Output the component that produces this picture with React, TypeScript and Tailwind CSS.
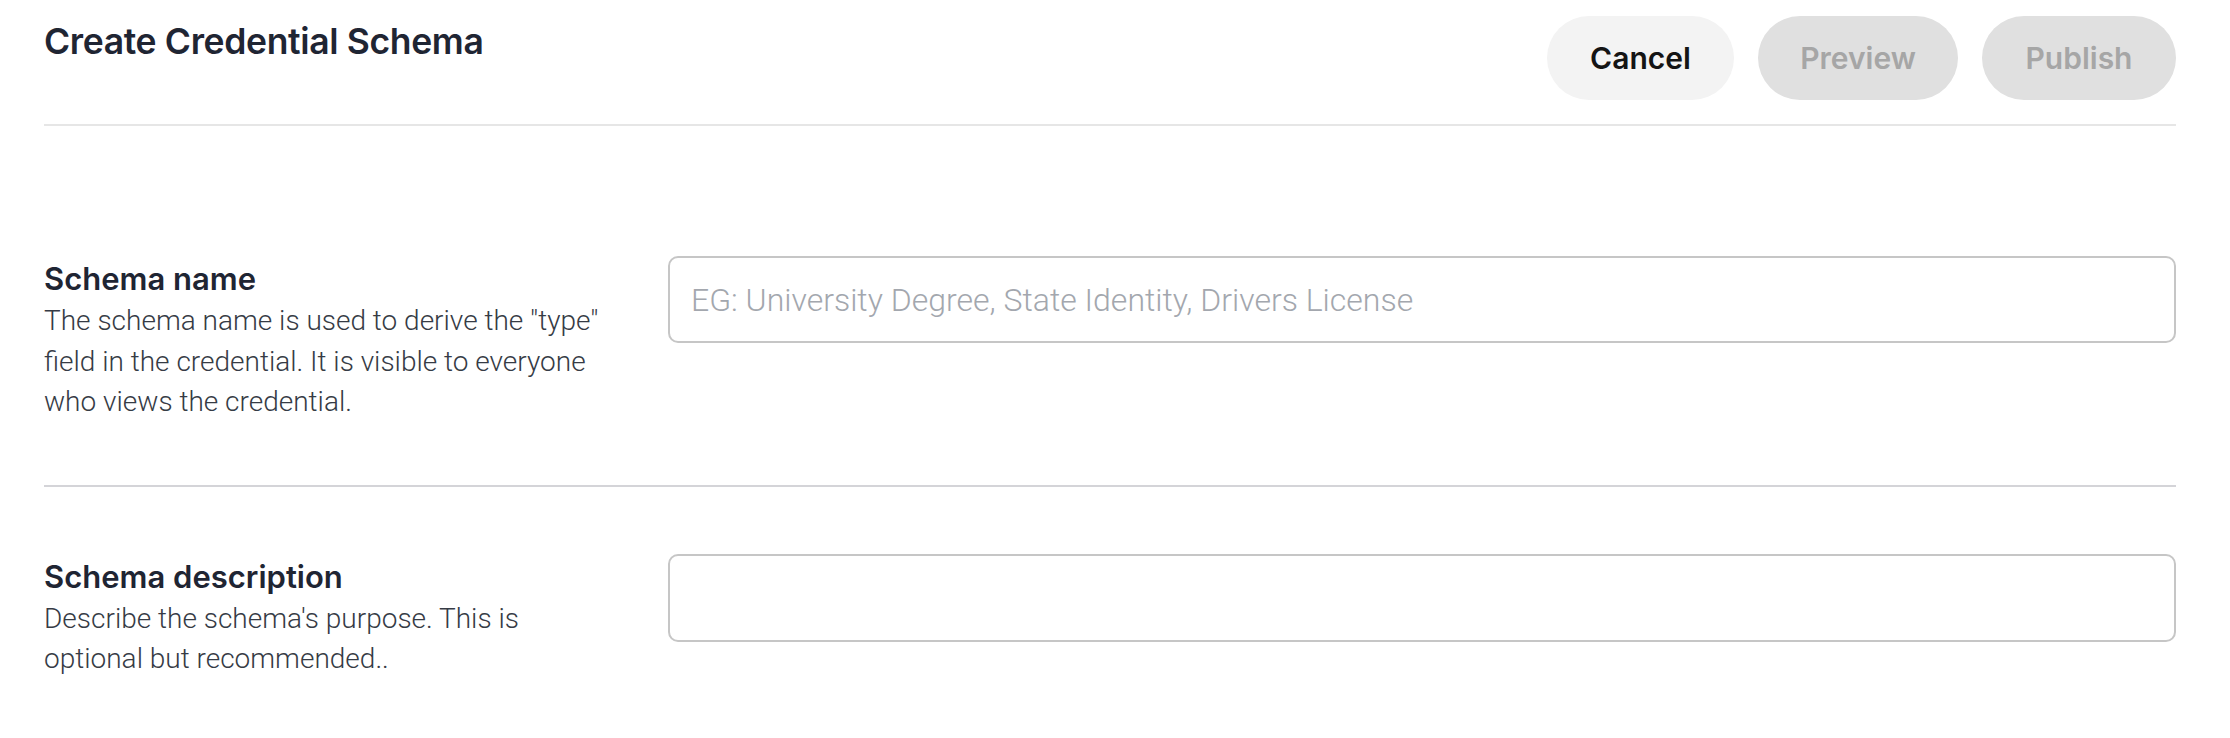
export default function App() {
  return (
    <main className="min-h-screen bg-white pl-[44px] pr-[54px] font-['Inter',sans-serif] text-[#1f2533]">
      {/* Header */}
      <div className="flex items-start justify-between border-b-2 border-[#e6e6e6] pb-[24px] pt-[16px]">
        <h1 className="mt-[4px] text-[35.5px] font-semibold leading-[44px] tracking-[-0.01em]">Create Credential Schema</h1>
        <div className="flex gap-[24px]">
          <button className="h-[84px] w-[187px] rounded-full bg-[#f3f3f3] text-[30px] font-semibold text-[#141414]">
            Cancel
          </button>
          <button className="h-[84px] w-[200px] rounded-full bg-[#e0e0e0] text-[30px] font-semibold text-[#a6a6a6]" disabled>
            Preview
          </button>
          <button className="h-[84px] w-[194px] rounded-full bg-[#e0e0e0] text-[30px] font-semibold text-[#a6a6a6]" disabled>
            Publish
          </button>
        </div>
      </div>

      {/* Schema name */}
      <section className="mt-[64px] flex items-start gap-[44px] border-b-2 border-[#d4d4d8] pb-[62px] pt-[66px]">
        <div className="w-[580px] shrink-0">
          <h2 className="mt-[2px] text-[31px] font-semibold leading-[42px]">Schema name</h2>
          <p className="mt-[1px] font-['Roboto',sans-serif] text-[28px] font-light leading-[40.5px] text-[#363b45]">
            The schema name is used to derive the "type" field in the credential. It is visible to everyone who views the
            credential.
          </p>
        </div>
        <input
          className="h-[87px] flex-1 rounded-[10px] border-2 border-[#c6c6c6] px-[21px] font-['Roboto',sans-serif] text-[32px] font-light text-[#333] outline-none placeholder:text-[#a3a7ae]"
          placeholder="EG: University Degree, State Identity, Drivers License"
        />
      </section>

      {/* Schema description */}
      <section className="flex items-start gap-[44px] pb-[66px] pt-[67px]">
        <div className="w-[580px] shrink-0">
          <h2 className="mt-[2px] text-[31px] font-semibold leading-[42px]">Schema description</h2>
          <p className="mt-[1px] font-['Roboto',sans-serif] text-[28px] font-light leading-[40.5px] text-[#363b45]">
            Describe the schema's purpose. This is optional but recommended..
          </p>
        </div>
        <input className="h-[88px] flex-1 rounded-[10px] border-2 border-[#c6c6c6] px-[21px] font-['Roboto',sans-serif] text-[32px] font-light outline-none" />
      </section>
    </main>
  );
}
